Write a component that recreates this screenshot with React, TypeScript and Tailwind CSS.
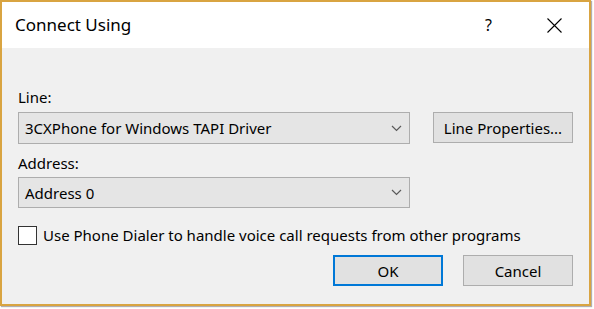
import { useState } from 'react'

function Chevron() {
  return (
    <svg width="11" height="7" viewBox="0 0 11 7" className="shrink-0">
      <path d="M1 1 L5.5 5.5 L10 1" fill="none" stroke="#5a5a5a" strokeWidth="1.2" />
    </svg>
  )
}

function Combo({ value, h }: { value: string; h: string }) {
  return (
    <div className={`flex ${h} w-[392px] items-center justify-between border border-[#adadad] bg-[#e5e5e5] pl-[6px] pr-[7px]`}>
      <span>{value}</span>
      <Chevron />
    </div>
  )
}

export default function App() {
  const [checked, setChecked] = useState(false)

  return (
    <div
      className="h-[309px] w-[594px] bg-white text-[15px] leading-[20px] text-black"
      style={{ fontFamily: '"Segoe UI", "Noto Sans", "Liberation Sans", sans-serif' }}
    >
      <div className="flex h-[306px] w-[591px] flex-col border-2 border-[#d9a441] shadow-[1px_1px_1px_#b0b0b0]">
        {/* Title bar */}
        <div className="flex h-[46px] shrink-0 items-center bg-white pl-[13px]">
          <span className="text-[17px]">Connect Using</span>
          <span className="ml-auto mr-[55px] text-[16px]">?</span>
          <svg width="15" height="15" viewBox="0 0 15 15" className="mr-[27px]">
            <path d="M0.5 0.5 L14.5 14.5 M14.5 0.5 L0.5 14.5" stroke="#000" strokeWidth="1.1" />
          </svg>
        </div>

        {/* Body */}
        <div className="flex flex-1 flex-col bg-[#f0f0f0] pl-[16px] pr-[16px]">
          <div className="mt-[39px]">Line:</div>
          <div className="mt-[5px] flex items-start gap-[23px]">
            <Combo value="3CXPhone for Windows TAPI Driver" h="h-[32px]" />
            <button className="flex h-[31px] w-[140px] items-center justify-center border border-[#adadad] bg-[#e1e1e1]">
              Line Properties...
            </button>
          </div>
          <div className="mt-[9px]">Address:</div>
          <div className="mt-[4px]">
            <Combo value="Address 0" h="h-[31px]" />
          </div>
          <label className="mt-[17px] flex items-center gap-[6px]">
            <span
              onClick={() => setChecked(!checked)}
              className="flex h-[19px] w-[19px] items-center justify-center border border-[#333333] bg-white"
            >
              {checked && (
                <svg width="12" height="10" viewBox="0 0 12 10">
                  <path d="M1 5 L4.5 8.5 L11 1" fill="none" stroke="#000" strokeWidth="1.4" />
                </svg>
              )}
            </span>
            <span>Use Phone Dialer to handle voice call requests from other programs</span>
          </label>
          <div className="mt-[10px] flex justify-end gap-[20px]">
            <button className="flex h-[31px] w-[110px] items-center justify-center border-2 border-[#0078d7] bg-[#e1e1e1]">
              OK
            </button>
            <button className="flex h-[31px] w-[110px] items-center justify-center border border-[#adadad] bg-[#e1e1e1]">
              Cancel
            </button>
          </div>
        </div>
      </div>
    </div>
  )
}
